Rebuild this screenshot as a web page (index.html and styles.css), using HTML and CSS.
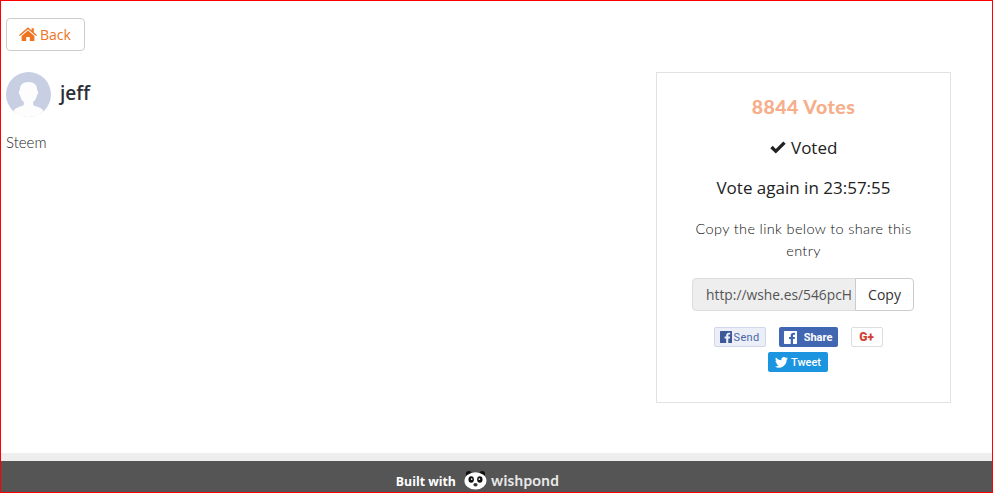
FILE: index.html
```html
<!DOCTYPE html>
<html lang="en">
<head>
<meta charset="utf-8">
<title>Entry</title>
<link rel="stylesheet" href="styles.css">
</head>
<body>
<div class="page">
  <main class="content">
    <a class="back" href="#">
      <svg class="back-icon" viewBox="0 0 18 14"><path d="M9 0.3 L12.6 3.4 V1.2 H14.8 V5.3 L18 8 L17 9.1 L9 2.3 L1 9.1 L0 8 Z M9 3.6 L15.4 9 V14 H10.8 V10 H7.2 V14 H2.6 V9 Z"/></svg>
      <span>Back</span>
    </a>
    <div class="columns">
      <section class="entry">
        <div class="person">
          <svg class="avatar" viewBox="0 0 45 45">
            <circle cx="22.5" cy="22.5" r="22.5" fill="#c8cfe3"/>
            <path d="M22.5 45 C15 45 10 42 7.500 39 C9 36 13 35 17.500 33.500 L18 30 C16 29 14.500 26 14 23 C12.500 22.500 12.500 18.500 14 18 C13.500 13 17 10 22.500 10 C28 10 31.500 13 31 18 C32.500 18.500 32.500 22.500 31 23 C30.500 26 29 29 27 30 L27.500 33.500 C32 35 36 36 37.500 39 C35 42 30 45 22.500 45 Z" fill="#fdfdfe"/>
          </svg>
          <h1 class="name">jeff</h1>
        </div>
        <p class="desc">Steem</p>
      </section>
      <aside class="card">
        <h2 class="votes">8844 Votes</h2>
        <p class="voted">
          <svg class="check" viewBox="0 0 16 13"><path d="M5.800 12.600 L0.300 7.200 L2.700 4.800 L5.800 7.900 L13.300 0.400 L15.700 2.800 Z"/></svg>
          Voted
        </p>
        <p class="again">Vote again in 23:57:55</p>
        <p class="hint">Copy the link below to share this entry</p>
        <div class="copy-group">
          <div class="copy-url">http://wshe.es/546pcH</div>
          <button class="copy-btn" type="button">Copy</button>
        </div>
        <div class="shares">
          <a class="share send" href="#">
            <svg class="f-box" viewBox="0 0 12 12"><path d="M0.600 0 H11.400 Q12 0 12 0.600 V11.400 Q12 12 11.400 12 H8.300 V7.400 H9.900 L10.100 5.500 H8.300 V4.400 C8.300 3.800 8.500 3.500 9.200 3.500 H10.200 V1.800 C9.900 1.800 9.400 1.700 8.700 1.700 C7.200 1.700 6.200 2.600 6.200 4.200 V5.500 H4.600 V7.400 H6.200 V12 H0.600 Q0 12 0 11.400 V0.600 Q0 0 0.600 0 Z"/></svg>
            Send
          </a>
          <a class="share fb" href="#">
            <svg class="f-box large" viewBox="0 0 12 12"><path d="M0.600 0 H11.400 Q12 0 12 0.600 V11.400 Q12 12 11.400 12 H8.300 V7.400 H9.900 L10.100 5.500 H8.300 V4.400 C8.300 3.800 8.500 3.500 9.200 3.500 H10.200 V1.800 C9.900 1.800 9.400 1.700 8.700 1.700 C7.200 1.700 6.200 2.600 6.200 4.200 V5.500 H4.600 V7.400 H6.200 V12 H0.600 Q0 12 0 11.400 V0.600 Q0 0 0.600 0 Z"/></svg>
            Share
          </a>
          <a class="share gplus" href="#">G+</a>
          <a class="share tweet" href="#">
            <svg class="bird" viewBox="0 0 24 20"><path d="M24 2.400 C23.100 2.800 22.200 3.100 21.200 3.200 C22.200 2.600 23 1.600 23.400 0.400 C22.400 1 21.400 1.400 20.200 1.600 C19.300 0.600 18 0 16.600 0 C13.900 0 11.700 2.200 11.700 4.900 C11.700 5.300 11.700 5.700 11.800 6 C7.700 5.800 4.100 3.800 1.700 0.900 C1.300 1.600 1 2.500 1 3.400 C1 5.100 1.900 6.600 3.200 7.500 C2.400 7.500 1.600 7.300 1 6.900 V7 C1 9.400 2.700 11.400 4.900 11.800 C4.100 12 3.200 12.100 2.700 11.900 C3.300 13.900 5.100 15.300 7.300 15.300 C5.600 16.600 3.500 17.400 1.200 17.400 C0.800 17.400 0.400 17.400 0 17.300 C2.200 18.700 4.800 19.500 7.500 19.500 C16.600 19.500 21.500 12 21.500 5.500 V4.900 C22.500 4.200 23.300 3.300 24 2.400 Z"/></svg>
            Tweet
          </a>
        </div>
      </aside>
    </div>
  </main>
  <footer class="footer">
    <div class="footer-band"></div>
    <div class="footer-bar">
      <span class="built">Built with</span>
      <svg class="panda" viewBox="0 0 24 20">
        <circle cx="5" cy="3.500" r="3" fill="#111"/>
        <circle cx="19" cy="3.500" r="3" fill="#111"/>
        <ellipse cx="12" cy="11" rx="11.500" ry="9" fill="#fff"/>
        <ellipse cx="7.500" cy="9.500" rx="2.800" ry="3.400" fill="#111"/>
        <ellipse cx="16.500" cy="9.500" rx="2.800" ry="3.400" fill="#111"/>
        <circle cx="8" cy="9" r="0.900" fill="#fff"/>
        <circle cx="16" cy="9" r="0.900" fill="#fff"/>
        <ellipse cx="12" cy="15" rx="2.200" ry="1.800" fill="#333"/>
      </svg>
      <span class="brand">wishpond</span>
    </div>
  </footer>
</div>
</body>
</html>
```
FILE: styles.css
```css
* { box-sizing: border-box; }
html, body { margin: 0; padding: 0; }
body { background: #fff; font-family: "Open Sans", sans-serif; color: #222; }
.page {
  width: 993px;
  height: 493px;
  border: 1px solid #f00;
  display: flex;
  flex-direction: column;
  overflow: hidden;
}
.content { flex: 1; padding: 17px 41px 0 5px; min-height: 0; }
.back {
  display: inline-flex;
  align-items: center;
  gap: 3px;
  height: 33px;
  width: 79px;
  padding: 0 0 0 12px;
  border: 1px solid #ccc;
  border-radius: 4px;
  color: #ee7421;
  font-size: 14px;
  text-decoration: none;
}
.back-icon { width: 18px; height: 14px; fill: #ee7421; margin-top: -2px; }
.columns { display: flex; justify-content: space-between; margin-top: 21px; }
.person { display: flex; align-items: center; gap: 9px; }
.avatar { width: 45px; height: 45px; display: block; }
.name { margin: 0 0 3px; font-size: 19px; font-weight: 600; color: #2b2f36; line-height: 27px; }
.desc { margin: 15px 0 0; font-family: "Lato", sans-serif; font-weight: 300; font-size: 15px; line-height: 20px; color: #222; }
.card {
  width: 295px;
  height: 331px;
  border: 1px solid #e2e2e2;
  padding: 22px 36px 0;
  text-align: center;
}
.votes {
  margin: 0;
  font-family: "Lato", sans-serif;
  font-weight: 900;
  font-size: 19.500px;
  line-height: 24px;
  letter-spacing: 0.5px;
  color: #f6ae8b;
}
.voted { margin: 17px 0 0; font-size: 17px; line-height: 23px; color: #222; }
.check { width: 16px; height: 13px; fill: #222; margin-right: 1px; }
.again { margin: 17px 0 0; font-size: 17px; line-height: 23px; color: #222; }
.hint {
  margin: 19px 0 0;
  font-family: "Lato", sans-serif;
  font-weight: 300;
  font-size: 14.500px;
  line-height: 22px;
  letter-spacing: 0.35px;
  color: #111;
}
.copy-group { display: flex; width: 222px; height: 33px; margin: 16px 0 0 -1px; }
.copy-url {
  width: 164px;
  padding-left: 10px;
  border: 1px solid #ddd;
  border-radius: 4px 0 0 4px;
  background: #eee;
  color: #555;
  font-size: 13.800px;
  line-height: 32px;
  white-space: nowrap;
  overflow: hidden;
}
.copy-btn {
  flex: 1;
  margin-left: -1px;
  border: 1px solid #ccc;
  border-radius: 0 4px 4px 0;
  background: #fff;
  color: #333;
  font-family: "Open Sans", sans-serif;
  font-size: 14px;
  padding: 0;
}
.shares {
  display: flex;
  flex-wrap: wrap;
  justify-content: center;
  column-gap: 13px;
  row-gap: 5px;
  margin-top: 16px;
  padding-right: 11px;
}
.share {
  display: inline-flex;
  align-items: center;
  justify-content: center;
  height: 20px;
  border-radius: 2px;
  font-size: 11px;
  text-decoration: none;
  font-family: "Roboto", "Open Sans", sans-serif;
}
.send { width: 52px; gap: 2px; background: #eceff7; border: 1px solid #d0d7ea; color: #4a66a8; letter-spacing: 0.3px; }
.fb { width: 59px; gap: 7px; background: #4267b2; color: #fff; font-weight: 700; }
.gplus { width: 32px; border: 1px solid #ddd; background: #fff; color: #cf4232; font-weight: 900; font-size: 12px; }
.tweet { width: 60px; gap: 3px; background: #1b95e0; color: #fff; font-weight: 500; }
.f-box { width: 12px; height: 12px; fill: #3b5998; }
.f-box.large { fill: #fff; width: 13px; height: 13px; }
.bird { width: 13px; height: 11px; fill: #fff; }
.footer { flex: none; }
.footer-band { height: 8px; background: #eee; }
.footer-bar {
  height: 31px;
  background: #555;
  display: flex;
  align-items: center;
  justify-content: center;
  gap: 8px;
  color: #fff;
  padding: 9px 38px 0 0;
}
.built { font-family: "Open Sans", sans-serif; font-weight: 700; font-size: 12.300px; }
.panda { width: 23px; height: 20px; margin: -3px 0 0; }
.brand { font-family: "Lato", sans-serif; font-weight: 700; font-size: 15.200px; color: #e8e8e8; letter-spacing: 0.3px; margin: -3px 0 0 -4px; }
```
